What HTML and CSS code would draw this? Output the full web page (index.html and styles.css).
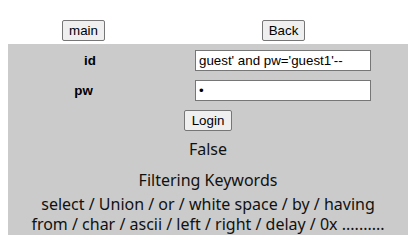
FILE: index.html
```html
<!DOCTYPE html>
<html lang="en">
<head>
<meta name="viewport" content="width=device-width, initial-scale=1">
<title>Login</title>
<link rel="stylesheet" href="styles.css">
</head>
<body>

<div class="nav">
    <div class="cell"><button type="button" class="btn">main</button></div>
    <div class="cell"><button type="button" class="btn">Back</button></div>
</div>

<div class="panel">
    <form class="login">
        <label for="id" class="lbl lbl-id">id</label>
        <div class="cell"><input type="text" id="id" name="id" value="guest' and pw='guest1'--"></div>
        <label for="pw" class="lbl">pw</label>
        <div class="cell"><input type="password" id="pw" name="pw" value="1"></div>
        <div class="submit"><button type="button" class="btn">Login</button></div>
    </form>

    <p class="result">False</p>
    <p class="title">Filtering Keywords</p>
    <p class="keywords">select / Union / or / white space / by / having<br>from / char / ascii / left / right / delay / 0x ..........</p>
</div>

</body>
</html>
```

FILE: styles.css
```css
body {
    margin: 8px;
    font-family: "Noto Sans", sans-serif;
    color: #000;
}
.nav, .login {
    display: grid;
    grid-template-columns: 151px 249px;
    align-items: center;
}
.nav {
    padding-top: 12px;
    height: 24px;
    align-items: start;
}
.cell {
    display: flex;
    justify-content: center;
}
.btn {
    font-family: "Liberation Sans", Arial, sans-serif;
    font-size: 13.33px;
    height: 21px;
    padding: 1px 6px;
    border: 1px solid #767676;
    border-radius: 2px;
    background-color: #efefef;
    color: #000;
}
.panel {
    width: 400px;
    height: 191px;
    background-color: #cbcbcb;
    padding-top: 6px;
    box-sizing: border-box;
    text-align: center;
}
.login {
    row-gap: 9px;
}
.lbl {
    font-family: "Liberation Sans", Arial, sans-serif;
    font-weight: bold;
    font-size: 13.33px;
    text-align: center;
}
.lbl-id {
    padding-left: 13px;
}
.login input {
    font-family: "Liberation Sans", Arial, sans-serif;
    font-size: 13.33px;
    width: 176px;
    height: 21px;
    box-sizing: border-box;
    padding: 1px 3px;
    border: 1px solid #767676;
    margin-left: -1px;
}
.submit {
    grid-column: 1 / 3;
    display: flex;
    justify-content: center;
}
.submit .btn {
    padding: 1px 7px;
}
.result, .title, .keywords {
    margin: 0;
    font-size: 16px;
    line-height: 20px;
    color: #111;
}
.result {
    margin-top: 8px;
}
.title {
    margin-top: 11px;
}
.keywords {
    margin-top: 4px;
}
```
